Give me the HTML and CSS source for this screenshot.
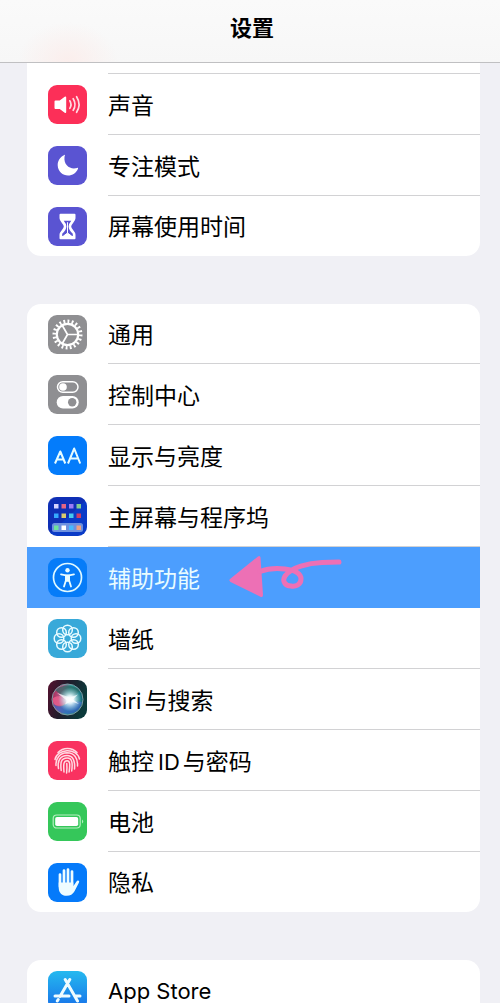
FILE: index.html
```html
<!DOCTYPE html>
<html lang="zh-CN">
<head>
<meta charset="utf-8">
<meta name="viewport" content="width=device-width, initial-scale=1">
<title>设置</title>
<link rel="stylesheet" href="styles.css">
</head>
<body>
<div class="screen">
  <header class="navbar"><h1 class="title">设置</h1></header>
  <main class="content">
    <ul class="group group-continued">
      <li class="row row-partial"></li>
      <li class="row">
        <svg class="icon" viewBox="0 0 39 39" aria-hidden="true"><rect width="39" height="39" rx="9" fill="#fc2f58"/><path d="M7.500 15.500h4.200l5-3.800q1.500-.6 1.500.8v14.500q0 1.400-1.500.8l-5-3.800H7.500q-1 0-1-1v-6.500q0-1 1-1z" fill="#fff"/><path d="M21.800 15.800q2.400 3.800 0 7.600M25.200 13.700q3.600 5.800 0 11.600M28.600 11.700q4.900 7.800 0 15.600" fill="none" stroke="#ffdbe2" stroke-width="1.700" stroke-linecap="round"/></svg>
        <span class="label">声音</span>
      </li>
      <li class="row">
        <svg class="icon" viewBox="0 0 39 39" aria-hidden="true"><rect width="39" height="39" rx="9" fill="#5a54d2"/><path d="M16.500 9C12 11 9.500 15 9.700 19.500c.3 6 5 10 10.300 10 4.500 0 8.300-2.600 10-6.800.3-.7-.2-1-.8-.8-6.700 2-13.700-2.400-12.700-10.900.1-.8.300-1.400.5-1.700.3-.5 0-.6-.5-.3z" fill="#fff"/></svg>
        <span class="label">专注模式</span>
      </li>
      <li class="row">
        <svg class="icon" viewBox="0 0 39 39" aria-hidden="true"><rect width="39" height="39" rx="9" fill="#5a54d2"/><path d="M12.500 7.800h14v3.500c0 3.200-4.300 5-4.300 8.200s4.300 5 4.300 8.200v3.500h-14v-3.500c0-3.200 4.300-5 4.300-8.200s-4.300-5-4.300-8.200z" fill="#fff" stroke="#fff" stroke-width="2" stroke-linejoin="round"/><path d="M15.700 13.800h7.600q-2.600 3-2.700 5.700.3 4 4.200 7.200v2.300H14.200v-2.300q3.900-3.200 4.200-7.200-.1-2.700-2.700-5.700z" fill="#5a54d2"/><path d="M19.500 15.500V26l4 3h-8l4-3z" fill="#fff" stroke="#fff"/></svg>
        <span class="label">屏幕使用时间</span>
      </li>
    </ul>

    <ul class="group">
      <li class="row">
        <svg class="icon" viewBox="0 0 39 39" aria-hidden="true"><rect width="39" height="39" rx="9" fill="#8f8f92"/><g fill="none" stroke="#fff"><circle cx="19.500" cy="19.500" r="13.200" stroke-width="3.600" pathLength="200" stroke-dasharray="4.500 5.500"/><circle cx="19.500" cy="19.500" r="10.700" stroke-width="2.200"/><path d="M19.500 19.500H30M19.500 19.500l-5.200-9M19.500 19.500l-5.200 9" stroke-width="1.700"/></g></svg>
        <span class="label">通用</span>
      </li>
      <li class="row">
        <svg class="icon" viewBox="0 0 39 39" aria-hidden="true"><rect width="39" height="39" rx="9" fill="#8f8f92"/><rect x="9.500" y="6.700" width="20.500" height="10.600" rx="5.300" fill="none" stroke="#fff" stroke-width="1.500"/><circle cx="15" cy="12" r="3.800" fill="#fff"/><rect x="8.700" y="21" width="22" height="12.500" rx="6.250" fill="#fff"/><circle cx="24.200" cy="27.200" r="4.200" fill="#8f8f92"/></svg>
        <span class="label">控制中心</span>
      </li>
      <li class="row">
        <svg class="icon" viewBox="0 0 39 39" aria-hidden="true"><rect width="39" height="39" rx="9" fill="#047cfb"/><path d="M7 27.500L12.300 15.500 17.300 27.500M8.800 23.500h7M20 27.500L26.200 12.500 32.200 27.500M22 22.500h8.300" fill="none" stroke="#e6fcff" stroke-width="2" stroke-linejoin="round"/></svg>
        <span class="label">显示与亮度</span>
      </li>
      <li class="row">
        <svg class="icon" viewBox="0 0 39 39" aria-hidden="true"><rect width="39" height="39" rx="9" fill="#0a3bc7"/><path d="M0 9q0-9 9-9h21q5 0 7 4L3 36q-3-2-3-6z" fill="#1028a8" opacity=".6"/><rect x="4" y="26" width="31" height="9" rx="2.500" fill="#6d91df"/><path fill="#d8d5ff" d="M6 7h4.500v4.500H6z"/><path fill="#e36584" d="M13.500 7H18v4.500h-4.500z"/><path fill="#9b7cf5" d="M21 7h4.500v4.500H21z"/><path fill="#83ce91" d="M28.500 7H33v4.500h-4.500z"/><path fill="#35a9ff" d="M6 16.500h4.500V21H6z"/><path fill="#d9c96d" d="M13.500 16.500H18V21h-4.500z"/><path fill="#44c8ed" d="M21 16.500h4.500V21H21z"/><path fill="#cc3c66" d="M28.500 16.500H33V21h-4.500z"/><path fill="#6ee39b" d="M6 28.500h4.500V33H6z"/><path fill="#fff" d="M13.500 28.500H18V33h-4.500z"/><path fill="#45baff" d="M21 28.500h4.500V33H21z"/><path fill="#f0a080" d="M28.500 28.500H33V33h-4.500z"/></svg>
        <span class="label">主屏幕与程序坞</span>
      </li>
      <li class="row row-selected">
        <svg class="icon" viewBox="0 0 39 39" aria-hidden="true"><rect width="39" height="39" rx="9" fill="#067cf8"/><circle cx="19.500" cy="19.500" r="14" fill="none" stroke="#dff9ff" stroke-width="1.700"/><circle cx="19.500" cy="12.300" r="2.200" fill="#e8fcff"/><path d="M13 16.300l5 1h3l5-1M17.900 17.500v5l-1.900 6M21.100 17.500v5l1.900 6" fill="none" stroke="#e8fcff" stroke-width="1.800" stroke-linecap="round" stroke-linejoin="round"/><path d="M17 16.700h5l-.3 7h-4.400z" fill="#e8fcff"/></svg>
        <span class="label">辅助功能</span>
        <svg class="arrow" viewBox="0 0 116 46" aria-hidden="true"><path d="M3 25L31 2.500q2-1.500 2.500 1L36 41q0 3-3 1.500L3.500 28q-2-1.500-.5-3z" fill="#ed70b5"/><path d="M33 17.500C42 14 50 14 58 15c8 1 16 3 16 10 0 6-6 8-10 7-6 0-9-5-6-10 6-9 24-13 37-13.500L112 8" fill="none" stroke="#ed70b5" stroke-width="5" stroke-linecap="round" stroke-linejoin="round"/></svg>
      </li>
      <li class="row">
        <svg class="icon" viewBox="0 0 39 39" aria-hidden="true"><rect width="39" height="39" rx="9" fill="#38a9d9"/><g fill="none" stroke="#e9fbff" stroke-width="1.500"><circle cx="19.500" cy="11" r="4.800"/><circle cx="25.500" cy="13.500" r="4.800"/><circle cx="28" cy="19.500" r="4.800"/><circle cx="25.500" cy="25.500" r="4.800"/><circle cx="19.500" cy="28" r="4.800"/><circle cx="13.500" cy="25.500" r="4.800"/><circle cx="11" cy="19.500" r="4.800"/><circle cx="13.500" cy="13.500" r="4.800"/></g></svg>
        <span class="label">墙纸</span>
      </li>
      <li class="row">
        <svg class="icon" viewBox="0 0 39 39" aria-hidden="true"><defs><linearGradient id="siri-base" x2="1" y2=".3"><stop stop-color="#55112f"/><stop offset=".5" stop-color="#211c2b"/><stop offset="1" stop-color="#0b3a3b"/></linearGradient><linearGradient id="siri-orb" x2="1" y2=".2"><stop stop-color="#a8204f"/><stop offset=".35" stop-color="#b05a88"/><stop offset=".6" stop-color="#2b9f98"/><stop offset="1" stop-color="#126b78"/></linearGradient><radialGradient id="siri-glow"><stop stop-color="#fff"/><stop offset=".3" stop-color="#effcff" stop-opacity=".95"/><stop offset="1" stop-color="#a0e0f0" stop-opacity="0"/></radialGradient></defs><rect width="39" height="39" rx="9" fill="url(#siri-base)"/><circle cx="19.500" cy="19.500" r="15.500" fill="url(#siri-orb)"/><path d="M7 10q12-9 25 0-3 5-11 8Q12 15 7 10z" fill="#2b6663" opacity=".7"/><path d="M5 23q6 7 15 0 4-3 14-1-2 11-14 12Q8 34 5 23z" fill="#3a63c4" opacity=".75"/><path d="M5 18q8-5 16 2-5 8-14 5-3-3-2-7z" fill="#f0608f" opacity=".75"/><circle cx="22" cy="19.500" r="12" fill="url(#siri-glow)"/><path d="M9 13l13 4.500 8-3-5 5 6 4.500-8-2.500-6 3 2-4z" fill="#fff" opacity=".7"/><circle cx="19.500" cy="19.500" r="15.500" fill="none" stroke="#7f9ba5"/></svg>
        <span class="label"><span class="latin">Siri</span>与搜索</span>
      </li>
      <li class="row">
        <svg class="icon" viewBox="0 0 39 39" aria-hidden="true"><rect width="39" height="39" rx="9" fill="#f93260"/><g fill="none" stroke="#ffdbe2" stroke-width="1.500" stroke-linecap="round"><path d="M10 11.500c5-5.500 14-5.500 19 0"/><path d="M7 18.500C9 7.500 29 6.500 31.500 18"/><path d="M8 24.500C7.500 17 12 12 19 11.800c7 0 11 5 10.500 13.200"/><path d="M10.500 27.500C9 19 13 14.500 19 14.400c5.500 0 8.300 4.500 7.500 13.600"/><path d="M13.200 29.500c-1-8-.2-12.500 6-12.500 5.300 0 5.500 6 4.500 13"/><path d="M16 31c-.6-7.500-.6-11.300 3.200-11.300 3.300 0 2.700 5 1.900 11.300"/><path d="M18.800 22.500q.4 5-.2 9.500"/></g></svg>
        <span class="label">触控<span class="latin latin-inner">ID</span>与密码</span>
      </li>
      <li class="row">
        <svg class="icon" viewBox="0 0 39 39" aria-hidden="true"><rect width="39" height="39" rx="9" fill="#35c75a"/><rect x="5.200" y="13" width="27" height="13" rx="3.500" fill="none" stroke="#b5efc0" stroke-width="1.200"/><rect x="7.200" y="15" width="23" height="9" rx="1.800" fill="#fff"/><path d="M34 17.500q2.500 2 0 4z" fill="#b5efc0"/></svg>
        <span class="label">电池</span>
      </li>
      <li class="row">
        <svg class="icon" viewBox="0 0 39 39" aria-hidden="true"><rect width="39" height="39" rx="9" fill="#057afa"/><path d="M12 11.500v12M16 7.500v14M20 6.500V22M24 8.500v14" fill="none" stroke="#effcff" stroke-width="2.700" stroke-linecap="round"/><path d="M10.700 19.500h14.600v3.800l3.200-4.800q1-1.500 2.300-.7.800.6.200 1.800l-4.500 8.600Q24 32.800 18.700 32.800c-5.200 0-8-3.300-8-8.300z" fill="#effcff"/></svg>
        <span class="label">隐私</span>
      </li>
    </ul>

    <ul class="group">
      <li class="row">
        <svg class="icon" viewBox="0 0 39 39" aria-hidden="true"><defs><linearGradient id="store" x2="0" y2="1"><stop stop-color="#25b9ef"/><stop offset="1" stop-color="#176ee9"/></linearGradient></defs><rect width="39" height="39" rx="9" fill="url(#store)"/><path d="M17.200 8.500L29.500 30M21.800 8.500L12 25.500M10.200 28.500L9.300 30M7 25h14M26.500 25H32" fill="none" stroke="#effcff" stroke-width="3" stroke-linecap="round"/></svg>
        <span class="label label-latin">App Store</span>
      </li>
    </ul>
  </main>
</div>
</body>
</html>
```
FILE: styles.css
```css
* {
  box-sizing: border-box;
}

body {
  margin: 0;
  background: #f0f0f5;
  color: #000;
  font-family: Inter, "Noto Sans CJK SC", sans-serif;
}

.screen {
  display: flex;
  flex-direction: column;
  height: 100vh;
}

.navbar {
  flex: none;
  display: flex;
  align-items: center;
  justify-content: center;
  padding: 11px 0 17px 4px;
  border-bottom: 1px solid #c0c0c2;
  background:
    radial-gradient(ellipse 50px 40px at 68px 100%, #fbeeec, transparent),
    linear-gradient(#fafafa, #f7f7f7);
}

.title {
  margin: 0;
  font-size: 22px;
  font-weight: 700;
  line-height: 34px;
}

.content {
  flex: 1;
  min-height: 0;
  overflow-y: auto;
  scrollbar-width: none;
}

.group {
  margin: 0 20px 48px 27px;
  padding: 0;
  overflow: hidden;
  border-radius: 14px;
  background: #fff;
  list-style: none;
}

.group-continued {
  border-radius: 0 0 14px 14px;
}

.row {
  position: relative;
  display: flex;
  align-items: center;
  gap: 21px;
  height: 61px;
  padding-left: 21px;
}

.row:first-child,
.row:last-child {
  height: 60px;
}

.row.row-partial {
  height: 11px;
}

.row:not(:last-child)::after {
  content: "";
  position: absolute;
  right: 0;
  bottom: 0;
  left: 81px;
  height: 1px;
  background: #d2d2d4;
}

.row-selected {
  background: #4c9efe;
  color: #e9fcff;
}

.row.row-selected::after {
  content: none;
}

.icon {
  flex: none;
  width: 39px;
  height: 39px;
}

.label {
  padding-top: 2px;
  font-size: 23px;
  line-height: 34px;
  white-space: nowrap;
}

.latin,
.label-latin {
  font-size: 22px;
}

.latin {
  margin-right: 3px;
}

.latin-inner {
  margin-left: 4px;
}

.arrow {
  position: absolute;
  top: 7px;
  left: 200px;
  width: 116px;
  height: 46px;
}
```
